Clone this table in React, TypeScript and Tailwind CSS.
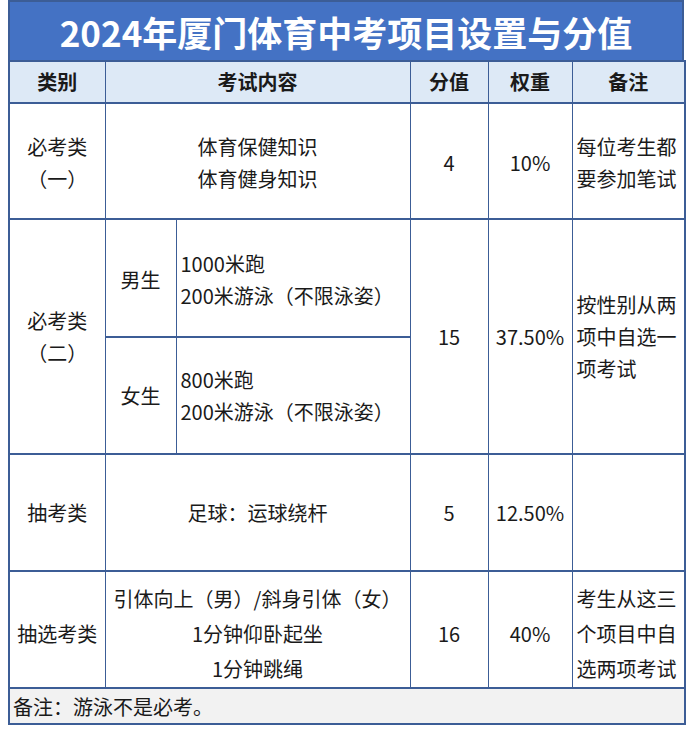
const font = { fontFamily: '"Noto Sans CJK SC", "Noto Sans", sans-serif' };

export default function App() {
  const cell = "border-x border-y-2 border-[#3c5d96] text-[20px] text-[#1a1a1a] p-0";
  return (
    <div className="bg-white w-[691px] h-[731px] pl-[8px]" style={font}>
      <div className="w-[676px] h-[60px] bg-[#4472c4] border-2 border-b-0 border-[#3c5d96] flex items-center justify-center">
        <h1 className="text-[35px] font-bold text-white leading-none">2024年厦门体育中考项目设置与分值</h1>
      </div>
      <table className="table-fixed border-collapse w-[676px] border-2 border-[#3c5d96]">
        <colgroup>
          <col className="w-[96px]" />
          <col className="w-[71px]" />
          <col className="w-[234px]" />
          <col className="w-[78px]" />
          <col className="w-[84px]" />
          <col className="w-[113px]" />
        </colgroup>
        <thead>
          <tr className="h-[42px] bg-[#dde9f6]">
            <th className={`${cell} text-[18px] font-bold`}>类别</th>
            <th colSpan={2} className={`${cell} text-[18px] font-bold`}>考试内容</th>
            <th className={`${cell} text-[18px] font-bold`}>分值</th>
            <th className={`${cell} text-[18px] font-bold`}>权重</th>
            <th className={`${cell} text-[18px] font-bold`}>备注</th>
          </tr>
        </thead>
        <tbody>
          <tr className="h-[116px] leading-[32px]">
            <td className={`${cell} text-center pt-[4px]`}>必考类<br />（一）</td>
            <td colSpan={2} className={`${cell} text-center pt-[4px]`}>体育保健知识<br />体育健身知识</td>
            <td className={`${cell} text-center pt-[4px]`}>4</td>
            <td className={`${cell} text-center pt-[4px]`}>10%</td>
            <td className={`${cell} pl-[4px] pt-[4px]`}>每位考生都<br />要参加笔试</td>
          </tr>
          <tr className="h-[118px] leading-[32px]">
            <td rowSpan={2} className={`${cell} text-center`}>必考类<br />（二）</td>
            <td className={`${cell} text-center pt-[4px]`}>男生</td>
            <td className={`${cell} pl-[4px] pt-[4px]`}>1000米跑<br />200米游泳（不限泳姿）</td>
            <td rowSpan={2} className={`${cell} text-center`}>15</td>
            <td rowSpan={2} className={`${cell} text-center`}>37.50%</td>
            <td rowSpan={2} className={`${cell} pl-[4px]`}>按性别从两<br />项中自选一<br />项考试</td>
          </tr>
          <tr className="h-[117px] leading-[32px]">
            <td className={`${cell} text-center`}>女生</td>
            <td className={`${cell} pl-[4px]`}>800米跑<br />200米游泳（不限泳姿）</td>
          </tr>
          <tr className="h-[117px]">
            <td className={`${cell} text-center`}>抽考类</td>
            <td colSpan={2} className={`${cell} text-center`}>足球：运球绕杆</td>
            <td className={`${cell} text-center`}>5</td>
            <td className={`${cell} text-center`}>12.50%</td>
            <td className={cell}></td>
          </tr>
          <tr className="h-[117px] leading-[35px]">
            <td className={`${cell} text-center pt-[8px]`}>抽选考类</td>
            <td colSpan={2} className={`${cell} text-center pt-[8px]`}>引体向上（男）/斜身引体（女）<br />1分钟仰卧起坐<br />1分钟跳绳</td>
            <td className={`${cell} text-center pt-[8px]`}>16</td>
            <td className={`${cell} text-center pt-[8px]`}>40%</td>
            <td className={`${cell} pl-[4px] pt-[8px]`}>考生从这三<br />个项目中自<br />选两项考试</td>
          </tr>
          <tr className="h-[36px] bg-[#f2f2f2]">
            <td colSpan={6} className={`${cell} text-[17px] pl-[3px] pt-[2px]`}>备注：游泳不是必考。</td>
          </tr>
        </tbody>
      </table>
    </div>
  );
}
